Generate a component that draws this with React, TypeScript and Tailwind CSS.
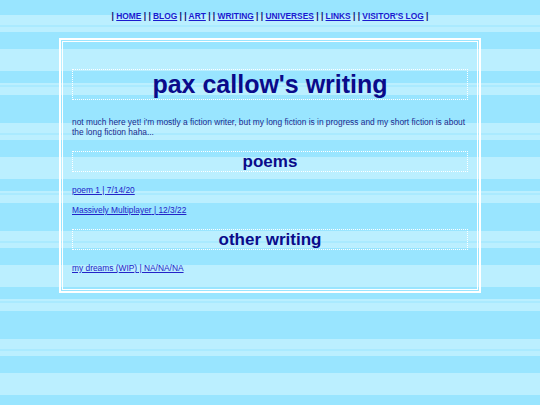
import React from 'react';

const navItems = ['HOME', 'BLOG', 'ART', 'WRITING', 'UNIVERSES', 'LINKS', "VISITOR'S LOG"];

const poems = [
  { title: 'poem 1', date: '7/14/20' },
  { title: 'Massively Multiplayer', date: '12/3/22' },
];

const other = [{ title: 'my dreams (WIP)', date: 'NA/NA/NA' }];

function SectionHeading({ children }: { children: React.ReactNode }) {
  return (
    <h2 className="border border-dotted border-white text-center text-[17px] leading-[19px] font-bold text-[#0a0a8a]">
      {children}
    </h2>
  );
}

function EntryLink({ title, date }: { title: string; date: string }) {
  return (
    <a href="#" className="block w-fit text-[8.4px] leading-[10px] text-[#2323c8] underline">
      {title} | {date}
    </a>
  );
}

export default function App() {
  return (
    <div className="min-h-screen w-full overflow-hidden font-['Liberation_Sans',Arial,sans-serif] bg-[repeating-linear-gradient(to_bottom,#99e5ff_0_15px,#bbefff_15px_25px,#aaeaff_25px_27px,#bbefff_27px_32px,#99e5ff_32px_49px,#bbefff_49px_71px,#99e5ff_71px_83px,#bbefff_83px_85px,#aaeaff_85px_87px,#bbefff_87px_95px,#99e5ff_95px_108px)]">
      {/* Nav */}
      <nav className="pt-[11px] text-center text-[8.4px] leading-[10px] font-bold text-[#0a0a6a]">
        {navItems.map((item, i) => (
          <React.Fragment key={item}>
            {i > 0 && ' '}| <a href="#" className="text-[#1a1ad0] underline">{item}</a> |
          </React.Fragment>
        ))}
      </nav>

      {/* Main box */}
      <div className="mx-auto mt-[17px] w-[422px] border-2 border-white p-px">
        <div className="border border-white px-[9px] pt-[27px] pb-[16px]">
          <h1 className="border border-dotted border-white text-center text-[25px] leading-[29px] font-bold text-[#0a0a8a]">
            pax callow's writing
          </h1>

          <p className="mt-[17px] text-[8.4px] leading-[10px] text-[#1c2a8c]">
            not much here yet! i'm mostly a fiction writer, but my long fiction is in progress and my short fiction is about the long fiction haha...
          </p>

          <div className="mt-[14px]">
            <SectionHeading>poems</SectionHeading>
          </div>
          <div className="mt-[13px] flex flex-col gap-[10px]">
            {poems.map((p) => (
              <EntryLink key={p.title} {...p} />
            ))}
          </div>

          <div className="mt-[14px]">
            <SectionHeading>other writing</SectionHeading>
          </div>
          <div className="mt-[13px] flex flex-col gap-[10px]">
            {other.map((p) => (
              <EntryLink key={p.title} {...p} />
            ))}
          </div>
        </div>
      </div>
    </div>
  );
}
